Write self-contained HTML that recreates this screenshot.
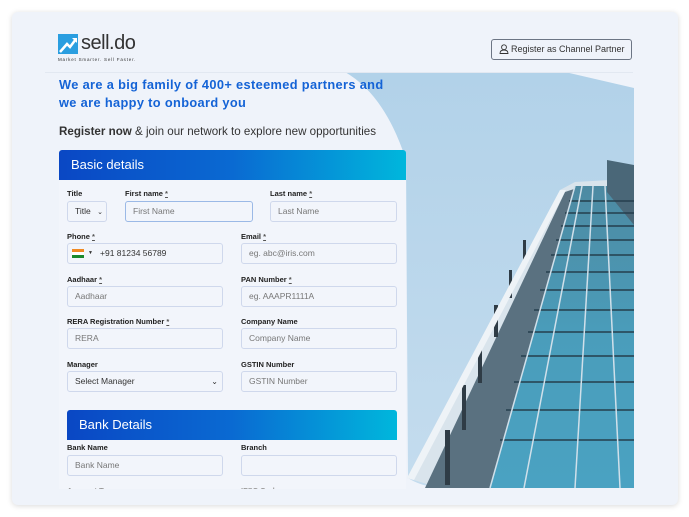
<!DOCTYPE html>
<html><head><style>
*{box-sizing:border-box;margin:0;padding:0}
body{width:689px;height:517px;background:#fff;font-family:"Liberation Sans",sans-serif;position:relative;overflow:hidden}
.card{position:absolute;left:12px;top:12px;width:666px;height:493px;background:#eff3fa;border-radius:6px;box-shadow:0 1px 6px rgba(0,0,0,.15);overflow:hidden}
.a{position:absolute}
.lbl{position:absolute;font-size:7.5px;color:#222;font-weight:bold}
.lbl u{color:#555}
.in{position:absolute;height:21px;border:1px solid #cfd8ec;border-radius:3px;background:#f2f5fb;font-size:8.5px;color:#777;padding-left:7px;line-height:19px}
.hdr{position:absolute;background:linear-gradient(90deg,#0a47c4,#0a6ad2 50%,#00b7dc);color:#fff;font-size:13px;padding-left:12px;line-height:30px;border-radius:3px 3px 0 0}
</style></head><body>
<div class="card">
 <svg class="a" style="left:0;top:0" width="666" height="493" viewBox="12 12 666 493">
  <defs><linearGradient id="sky" x1="0" y1="0" x2="0" y2="1"><stop offset="0" stop-color="#b2d2e9"/><stop offset="1" stop-color="#c4dcee"/></linearGradient>
  <linearGradient id="gl" x1="0" y1="0" x2="0" y2="1"><stop offset="0" stop-color="#4d8aa2"/><stop offset=".5" stop-color="#4a9dbb"/><stop offset="1" stop-color="#4aa2c2"/></linearGradient></defs>
  <path d="M345 72 L565 72 L634 88 L634 488 L440 488 Q420 486 408 478 L406 160 Q385 95 345 72Z" fill="url(#sky)"/>
  <path d="M407 478 L560 190 L575 182 L610 180 L634 186 L634 488 L440 488Z" fill="#d9e4ec"/>
  <path d="M425 488 L565 192 L577 188 L495 488Z" fill="#5a7180"/>
  <path d="M490 488 L575 186 L634 186 L634 488Z" fill="url(#gl)"/>
  <path d="M607 160 L634 165 L634 225 L607 192Z" fill="#4a6778"/>
  <g stroke="#253f4d" stroke-width="1.4">
   <line x1="500" y1="440" x2="634" y2="440"/><line x1="506" y1="410" x2="634" y2="410"/><line x1="514" y1="382" x2="634" y2="382"/><line x1="521" y1="356" x2="634" y2="356"/><line x1="528" y1="332" x2="634" y2="332"/><line x1="534" y1="310" x2="634" y2="310"/><line x1="540" y1="290" x2="634" y2="290"/><line x1="546" y1="272" x2="634" y2="272"/><line x1="551" y1="255" x2="634" y2="255"/><line x1="556" y1="240" x2="634" y2="240"/><line x1="561" y1="226" x2="634" y2="226"/><line x1="565" y1="213" x2="634" y2="213"/><line x1="569" y1="201" x2="634" y2="201"/>
  </g>
  <g stroke="#d0e0ea" stroke-width="1.5">
   <line x1="524" y1="488" x2="582" y2="186"/><line x1="575" y1="488" x2="593" y2="186"/><line x1="620" y1="488" x2="605" y2="186"/><line x1="490" y1="488" x2="575" y2="186"/>
  </g>
  <g fill="#2f3c46"><rect x="445" y="430" width="5" height="55"/><rect x="462" y="385" width="4" height="45"/><rect x="478" y="345" width="4" height="38"/><rect x="494" y="305" width="4" height="32"/><rect x="509" y="270" width="3" height="28"/><rect x="523" y="240" width="3" height="24"/></g>
  <path d="M407 478 L560 190 L566 190 L414 480Z" fill="#eef3f7"/>
 </svg>
 <svg class="a" style="left:46px;top:22px" width="22" height="22"><rect width="20" height="20" fill="#2a9ee0"/><path d="M2 18 L9 10 L12 13 L18 5" stroke="#fff" stroke-width="2.5" fill="none"/><path d="M14 4 L19 4 L19 9Z" fill="#fff"/></svg>
 <div class="a" style="left:69px;top:20px;font-size:20px;color:#333;letter-spacing:-.5px">sell.do</div>
 <div class="a" style="left:46px;top:45px;font-size:4.5px;color:#333;letter-spacing:.8px">Market Smarter. Sell Faster.</div>
 <div class="a" style="left:479px;top:27px;width:141px;height:21px;border:1px solid #6c7584;border-radius:3px;font-size:9px;color:#333;line-height:19px;padding-left:19px;white-space:nowrap">Register as Channel Partner</div>
 <svg class="a" style="left:487px;top:32px" width="10" height="10"><circle cx="5" cy="3.2" r="2.4" fill="none" stroke="#333" stroke-width=".9"/><path d="M1 9.5 Q1 6 5 6 Q9 6 9 9.5Z" fill="none" stroke="#333" stroke-width=".9"/></svg>
 <div class="a" style="left:33px;top:60px;width:588px;height:1px;background:#e2e8f1"></div>
 <div class="a" style="left:47px;top:64px;font-size:12.8px;color:#1463d6;font-weight:bold;line-height:18px;letter-spacing:.35px">We are a big family of 400+ esteemed partners and<br>we are happy to onboard you</div>
 <div class="a" style="left:47px;top:113px;font-size:11.6px;color:#333"><b>Register now</b> &amp; join our network to explore new opportunities</div>
 <div class="a" style="left:47px;top:168px;width:347px;height:320px;background:#f2f5fb"></div>
 <div class="hdr" style="left:47px;top:138px;width:347px;height:30px">Basic details</div>
</div>
<div class="lbl" style="left:67px;top:189px">Title</div>
<div class="lbl" style="left:125px;top:189px">First name <u>*</u></div>
<div class="lbl" style="left:270px;top:189px">Last name <u>*</u></div>
<div class="in" style="left:67px;top:201px;width:40px;color:#333">Title <span style="font-size:7px;margin-left:4px">&#8964;</span></div>
<div class="in" style="left:125px;top:201px;width:128px;border:1.5px solid #9bb9e6">First Name</div>
<div class="in" style="left:270px;top:201px;width:127px">Last Name</div>
<div class="lbl" style="left:67px;top:232px">Phone <u>*</u></div>
<div class="lbl" style="left:241px;top:232px">Email <u>*</u></div>
<div class="in" style="left:67px;top:243px;width:156px;color:#333;padding-left:32px">+91 81234 56789</div>
<div class="a" style="left:72px;top:249px;width:12px;height:9px;background:linear-gradient(#f08a24 33%,#fff 33% 66%,#1a8a2e 66%)"></div>
<div class="a" style="left:88px;top:250px;font-size:5px;color:#333">▼</div>
<div class="in" style="left:241px;top:243px;width:156px">eg. abc@iris.com</div>
<div class="lbl" style="left:67px;top:275px">Aadhaar <u>*</u></div>
<div class="lbl" style="left:241px;top:275px">PAN Number <u>*</u></div>
<div class="in" style="left:67px;top:286px;width:156px">Aadhaar</div>
<div class="in" style="left:241px;top:286px;width:156px">eg. AAAPR1111A</div>
<div class="lbl" style="left:67px;top:317px">RERA Registration Number <u>*</u></div>
<div class="lbl" style="left:241px;top:317px">Company Name</div>
<div class="in" style="left:67px;top:328px;width:156px">RERA</div>
<div class="in" style="left:241px;top:328px;width:156px">Company Name</div>
<div class="lbl" style="left:67px;top:360px">Manager</div>
<div class="lbl" style="left:241px;top:360px">GSTIN Number</div>
<div class="in" style="left:67px;top:371px;width:156px;color:#333">Select Manager<span style="position:absolute;right:4px;font-size:8px">&#8964;</span></div>
<div class="in" style="left:241px;top:371px;width:156px">GSTIN Number</div>
<div class="hdr" style="left:67px;top:410px;width:330px;height:30px">Bank Details</div>
<div class="lbl" style="left:67px;top:443px">Bank Name</div>
<div class="lbl" style="left:241px;top:443px">Branch</div>
<div class="in" style="left:67px;top:455px;width:156px">Bank Name</div>
<div class="in" style="left:241px;top:455px;width:156px"></div>
<div class="lbl" style="left:67px;top:486px;color:#999">Account Type</div>
<div class="lbl" style="left:241px;top:486px;color:#999">IFSC Code</div>
<div class="a" style="left:13px;top:489px;width:664px;height:15px;background:#eff3fa;border-radius:0 0 6px 6px"></div>
</body></html>
